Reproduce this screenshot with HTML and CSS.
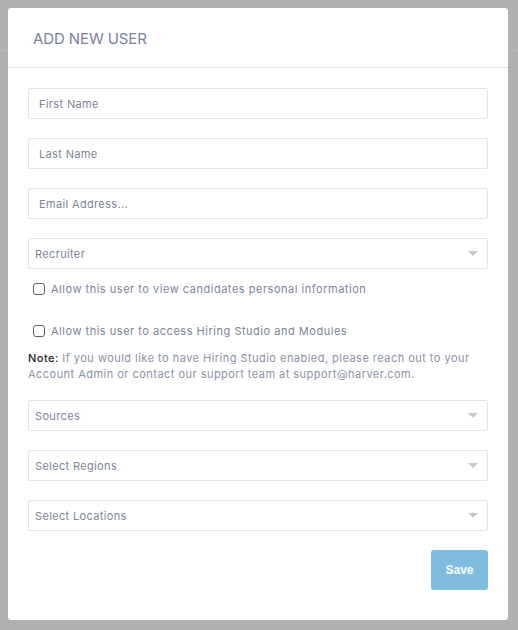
FILE: index.html
```html
<!DOCTYPE html>
<html lang="en">
<head>
<meta charset="utf-8">
<title>Add new user</title>
<link rel="stylesheet" href="styles.css">
</head>
<body>
<div class="page-bar"></div>
<div class="modal">
  <div class="modal-header">ADD NEW USER</div>
  <form class="modal-body">
    <div class="field"><input class="input" type="text" placeholder="First Name"></div>
    <div class="field"><input class="input" type="text" placeholder="Last Name"></div>
    <div class="field"><input class="input" type="text" placeholder="Email Address..."></div>
    <div class="select"><span>Recruiter</span><i class="caret"></i></div>
    <label class="check check-first"><input type="checkbox"><span>Allow this user to view candidates personal information</span></label>
    <label class="check check-second"><input type="checkbox"><span>Allow this user to access Hiring Studio and Modules</span></label>
    <p class="note"><b>Note:</b> If you would like to have Hiring Studio enabled, please reach out to your Account Admin or contact our support team at support@harver.com.</p>
    <div class="select select-after-note"><span>Sources</span><i class="caret"></i></div>
    <div class="select select-gap"><span>Select Regions</span><i class="caret"></i></div>
    <div class="select select-gap"><span>Select Locations</span><i class="caret"></i></div>
    <div class="actions"><button type="button" class="btn-save">Save</button></div>
  </form>
</div>
</body>
</html>
```
FILE: styles.css
```css
* { box-sizing: border-box; }
html, body { margin: 0; padding: 0; }
body {
  background: #b0b0b0;
  width: 518px;
  height: 630px;
  overflow: hidden;
  font-family: Inter, "Noto Sans", sans-serif;
  position: relative;
}
.page-bar {
  height: 51px;
  border-bottom: 1px solid #b9b9b9;
}
.modal {
  position: absolute;
  top: 8px;
  left: 8px;
  width: 500px;
  height: 612px;
  background: #fff;
  border-radius: 3px;
}
.modal-header {
  height: 60px;
  border-bottom: 1px solid #e5e5e5;
  display: flex;
  align-items: center;
  padding-left: 25px;
  padding-top: 1px;
  font-size: 15px;
  color: #79819a;
  letter-spacing: -0.1px;
}
.modal-body {
  padding: 20px 20px 0;
  display: flex;
  flex-direction: column;
}
.field { margin-bottom: 19px; }
.input, .select {
  width: 100%;
  height: 31px;
  border: 1px solid #e3e3e3;
  border-radius: 2px;
  padding: 0 10px;
  font-family: Inter, "Noto Sans", sans-serif;
  font-size: 11px;
  letter-spacing: 0.35px;
  color: #7c8499;
  outline: none;
  background: #fff;
}
.input::placeholder { color: #7c8499; }
.select {
  display: flex;
  align-items: center;
  justify-content: space-between;
  padding: 0 9px 0 6px;
}
.select-gap { margin-top: 19px; }
.select-after-note { margin-top: 18px; }
.caret {
  width: 0;
  height: 0;
  border-left: 5px solid transparent;
  border-right: 5px solid transparent;
  border-top: 5px solid #c3c7d0;
}
.check {
  display: flex;
  align-items: center;
  font-size: 11px;
  letter-spacing: 0.52px;
  color: #7c8499;
  padding-left: 5px;
}
.check-first { margin-top: 13px; }
.check-second { margin-top: 28px; }
.check input {
  appearance: none;
  -webkit-appearance: none;
  width: 12px;
  height: 12px;
  margin: 0 6px 0 0;
  border: 1px solid #5f5f5f;
  border-radius: 3px;
  background: #fff;
  flex: none;
}
.note {
  margin: 12px 0 0;
  font-size: 11px;
  line-height: 16px;
  letter-spacing: 0.47px;
  color: #8a91a5;
}
.note b {
  font-weight: 500;
  color: #222;
}
.actions {
  display: flex;
  justify-content: flex-end;
  margin-top: 19px;
}
.btn-save {
  width: 57px;
  height: 40px;
  border: none;
  border-radius: 3px;
  background: #7fbcdd;
  color: #fff;
  font-family: "Liberation Sans", Arial, sans-serif;
  font-size: 12px;
  font-weight: 700;
}
```
